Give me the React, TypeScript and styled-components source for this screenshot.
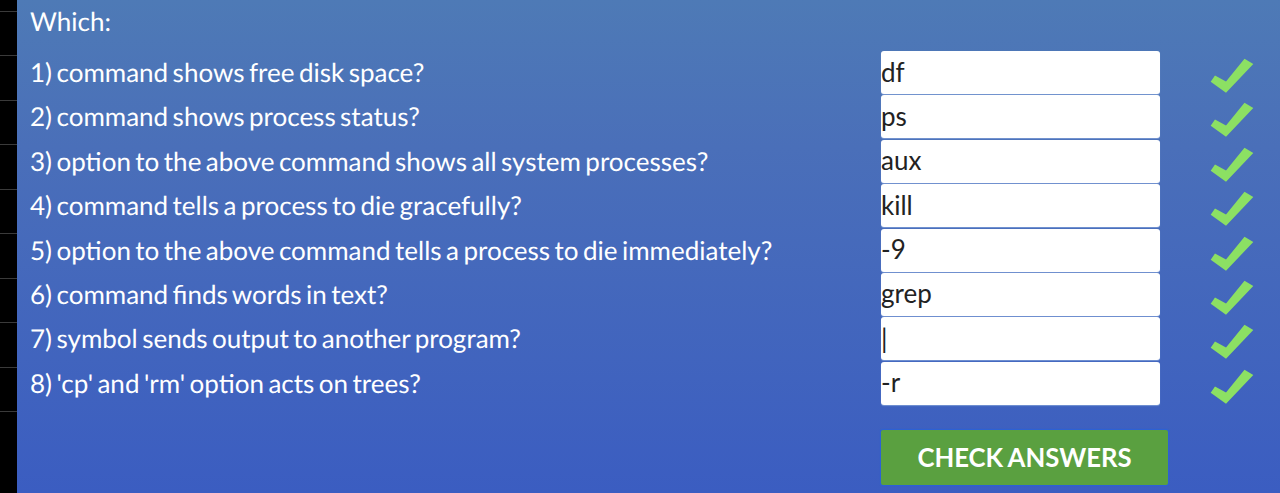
import React from "react";
import styled, { createGlobalStyle } from "styled-components";

const GlobalStyle = createGlobalStyle`
  html, body {
    margin: 0;
    padding: 0;
    height: 493px;
    overflow: hidden;
    background: #f3f5f8;
    font-family: Lato, "Open Sans", sans-serif;
    text-rendering: geometricPrecision;
  }
`;

const Page = styled.div`
  display: flex;
  width: 1280px;
  height: 493px;
  overflow: hidden;
`;

const Gutter = styled.div`
  width: 17px;
  flex: none;
  background-color: #000;
  background-image: repeating-linear-gradient(
    to bottom,
    #000 0,
    #000 11px,
    #3a3a3a 11px,
    #3a3a3a 11.9px,
    #000 11.9px,
    #000 44.45px
  );
`;

const Panel = styled.form`
  flex: 1;
  display: flex;
  flex-direction: column;
  padding: 0 11px 0 13px;
  color: #fff;
  background: linear-gradient(to bottom, #4e7ab6 0%, #4a6fb9 30%, #3b5dc1 100%);
`;

const Heading = styled.div`
  height: 51px;
  padding-top: 4px;
  box-sizing: border-box;
  font-size: 26px;
  line-height: 34px;
`;

const Row = styled.div`
  display: flex;
  align-items: flex-start;
  height: 44.4px;
`;

const Question = styled.label`
  width: 851px;
  flex: none;
  font-size: 26px;
  line-height: 43px;
  word-spacing: -2.2px;
  white-space: nowrap;
`;

const Answer = styled.input`
  width: 279px;
  height: 43px;
  flex: none;
  box-sizing: border-box;
  padding: 0 0 2px 0;
  border: 0;
  border-radius: 3px;
  outline: 0;
  background: #fff;
  color: #222;
  font-family: inherit;
  font-size: 26px;
  box-shadow: 0 1px 1px rgba(130, 160, 215, 0.8);
`;

const Tick = styled.svg`
  width: 44px;
  height: 36px;
  flex: none;
  margin: 7px 0 0 50px;
  fill: #8ce063;
`;

const Actions = styled.div`
  padding: 23.8px 0 0 851px;
`;

const CheckButton = styled.button`
  display: block;
  width: 287px;
  height: 55px;
  padding: 0;
  border: 0;
  border-radius: 2px;
  background: #5aa040;
  box-shadow: 0 0 1px 1px #2c62d6;
  color: #fff;
  font-family: inherit;
  font-size: 25.7px;
  font-weight: 700;
  line-height: 54px;
  word-spacing: -1px;
  text-transform: uppercase;
`;

const questions = [
  ["1) command shows free disk space?", "df"],
  ["2) command shows process status?", "ps"],
  ["3) option to the above command shows all system processes?", "aux"],
  ["4) command tells a process to die gracefully?", "kill"],
  ["5) option to the above command tells a process to die immediately?", "-9"],
  ["6) command finds words in text?", "grep"],
  ["7) symbol sends output to another program?", "|"],
  ["8) 'cp' and 'rm' option acts on trees?", "-r"],
];

export default function App() {
  return (
    <Page>
      <GlobalStyle />
      <Gutter />
      <Panel onSubmit={(e) => e.preventDefault()}>
        <Heading>Which:</Heading>
        {questions.map(([text, answer]) => (
          <Row key={text}>
            <Question>{text}</Question>
            <Answer defaultValue={answer} aria-label={text} />
            <Tick viewBox="0 0 44 36" aria-hidden="true">
              <polygon points="0.7,23.7 16,34.7 43.3,6 34.5,0.7 16,23.5 5,17.5" />
            </Tick>
          </Row>
        ))}
        <Actions>
          <CheckButton type="submit">Check answers</CheckButton>
        </Actions>
      </Panel>
    </Page>
  );
}
